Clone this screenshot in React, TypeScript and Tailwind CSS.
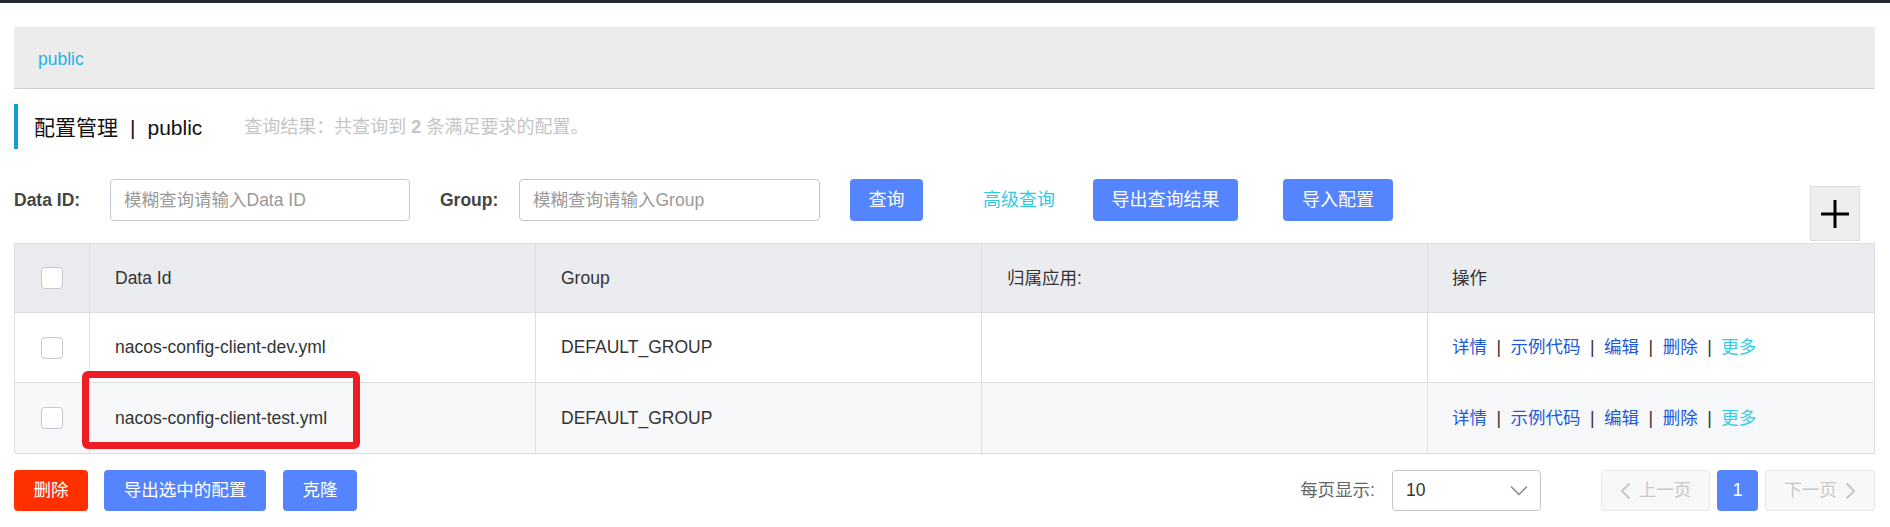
import React from "react";

const font = { fontFamily: '"Liberation Sans", "Noto Sans CJK SC", sans-serif' };

function Checkbox() {
  return <div className="w-[22px] h-[22px] rounded-[4px] border border-[#c4c6cf] bg-white" />;
}

function Actions() {
  const sep = <span className="mx-[9.5px] text-[#333]">|</span>;
  return (
    <div className="flex items-center text-[#1f5bd6]">
      <span>详情</span>
      {sep}
      <span>示例代码</span>
      {sep}
      <span>编辑</span>
      {sep}
      <span>删除</span>
      {sep}
      <span className="text-[#33cde5]">更多</span>
    </div>
  );
}

export default function App() {
  const rows = [
    { id: "nacos-config-client-dev.yml", group: "DEFAULT_GROUP" },
    { id: "nacos-config-client-test.yml", group: "DEFAULT_GROUP" },
  ];
  return (
    <div className="w-[1890px] h-[527px] bg-white text-[17.5px] text-[#333] overflow-hidden" style={font}>
      <div className="h-[3px] bg-[#22262d]" />
      <div className="pl-[14px] pr-[15px]">
        {/* breadcrumb */}
        <div className="mt-[24px] h-[62px] bg-[#ececec] border-b border-[#cfcfcf] flex items-center pl-[24px] pt-[3px]">
          <span className="text-[#1fb3e2]">public</span>
        </div>

        {/* heading */}
        <div className="mt-[15px] h-[45px] flex items-center border-l-[4px] border-[#129ed6] pl-[16px] pt-[2px]">
          <span className="text-[21px] text-[#111]">配置管理</span>
          <span className="text-[21px] text-[#111] mx-[12px]">|</span>
          <span className="text-[21px] text-[#111]">public</span>
          <span className="ml-[42px] text-[18px] text-[#c5c5c5]">
            查询结果：共查询到 <b className="font-bold">2</b> 条满足要求的配置。
          </span>
        </div>

        {/* search row */}
        <div className="mt-[30px] flex items-start">
          <div className="flex items-center h-[42px]">
            <span className="font-bold text-[#444] w-[96px]">Data ID:</span>
            <div className="w-[300px] h-[42px] border border-[#c4c6cf] rounded-[4px] flex items-center pl-[13px] text-[#999]">
              模糊查询请输入Data ID
            </div>
            <span className="font-bold text-[#444] ml-[30px] w-[79px]">Group:</span>
            <div className="w-[301px] h-[42px] border border-[#c4c6cf] rounded-[4px] flex items-center pl-[13px] text-[#999]">
              模糊查询请输入Group
            </div>
            <button className="ml-[30px] w-[73px] h-[42px] rounded-[4px] bg-[#5584ff] text-white text-[18px]">查询</button>
            <span className="ml-[60px] text-[#33c9e3] text-[18px]">高级查询</span>
            <button className="ml-[38px] w-[145px] h-[42px] rounded-[4px] bg-[#5584ff] text-white text-[18px]">导出查询结果</button>
            <button className="ml-[45px] w-[110px] h-[42px] rounded-[4px] bg-[#5584ff] text-white text-[18px]">导入配置</button>
          </div>
          <div className="flex-1" />
          <div className="mt-[7px] mr-[15px] w-[50px] h-[55px] bg-[#eeeeee] border border-[#dddddd] flex items-center justify-center">
            <svg width="32" height="32" viewBox="0 0 32 32">
              <path d="M16 2v28M2 16h28" stroke="#000" strokeWidth="3" />
            </svg>
          </div>
        </div>

        {/* table */}
        <div className="relative mt-[2px]">
          <div className="border border-[#dcdee3]">
            <div className="grid grid-cols-[75px_446px_446px_446px_1fr] h-[69px] bg-[#ebecf0] border-b border-[#dcdee3]">
              <div className="flex items-center justify-center border-r border-[#dcdee3]"><Checkbox /></div>
              <div className="flex items-center pl-[25px] border-r border-[#dcdee3]">Data Id</div>
              <div className="flex items-center pl-[25px] border-r border-[#dcdee3]">Group</div>
              <div className="flex items-center pl-[25px] border-r border-[#dcdee3]">归属应用:</div>
              <div className="flex items-center pl-[24px]">操作</div>
            </div>
            {rows.map((r, i) => (
              <div
                key={r.id}
                className={
                  "grid grid-cols-[75px_446px_446px_446px_1fr] h-[70px] " +
                  (i === 0 ? "bg-white border-b border-[#dcdee3]" : "bg-[#f7f8fa]")
                }
              >
                <div className="flex items-center justify-center border-r border-[#dcdee3]"><Checkbox /></div>
                <div className="flex items-center pl-[25px] border-r border-[#dcdee3]">{r.id}</div>
                <div className="flex items-center pl-[25px] border-r border-[#dcdee3]">{r.group}</div>
                <div className="flex items-center pl-[25px] border-r border-[#dcdee3]"></div>
                <div className="flex items-center pl-[24px]"><Actions /></div>
              </div>
            ))}
          </div>
          <div className="absolute left-[68px] top-[128px] w-[278px] h-[78px] border-[7px] border-[#ee1c25] rounded-[6px]" />
        </div>

        {/* footer */}
        <div className="mt-[16px] flex items-center h-[41px]">
          <button className="w-[74px] h-[41px] rounded-[4px] bg-[#ff3000] text-white">删除</button>
          <button className="ml-[16px] w-[162px] h-[41px] rounded-[4px] bg-[#5584ff] text-white">导出选中的配置</button>
          <button className="ml-[17px] w-[74px] h-[41px] rounded-[4px] bg-[#5584ff] text-white">克隆</button>
          <div className="flex-1" />
          <span className="text-[#666]">每页显示:</span>
          <div className="ml-[17px] w-[149px] h-[41px] border border-[#c4c6cf] rounded-[4px] flex items-center pl-[13px] pr-[12px] justify-between text-[#333]">
            <span>10</span>
            <svg width="18" height="12" viewBox="0 0 18 12">
              <path d="M1 1.5l8 8 8-8" fill="none" stroke="#888" strokeWidth="1.5" />
            </svg>
          </div>
          <div className="ml-[60px] w-[109px] h-[41px] rounded-[4px] border border-[#e6e7eb] bg-[#f7f8fa] flex items-center justify-center gap-[8px] text-[#c8c8c8]">
            <svg width="11" height="18" viewBox="0 0 11 18">
              <path d="M9.5 1.5L2 9l7.5 7.5" fill="none" stroke="#c8c8c8" strokeWidth="2" />
            </svg>
            <span>上一页</span>
          </div>
          <div className="ml-[7px] w-[41px] h-[41px] rounded-[4px] bg-[#5584ff] text-white flex items-center justify-center">1</div>
          <div className="ml-[7px] w-[110px] h-[41px] rounded-[4px] border border-[#e6e7eb] bg-[#f7f8fa] flex items-center justify-center gap-[8px] text-[#c8c8c8]">
            <span>下一页</span>
            <svg width="11" height="18" viewBox="0 0 11 18">
              <path d="M1.5 1.5L9 9l-7.5 7.5" fill="none" stroke="#c8c8c8" strokeWidth="2" />
            </svg>
          </div>
        </div>
      </div>
    </div>
  );
}
